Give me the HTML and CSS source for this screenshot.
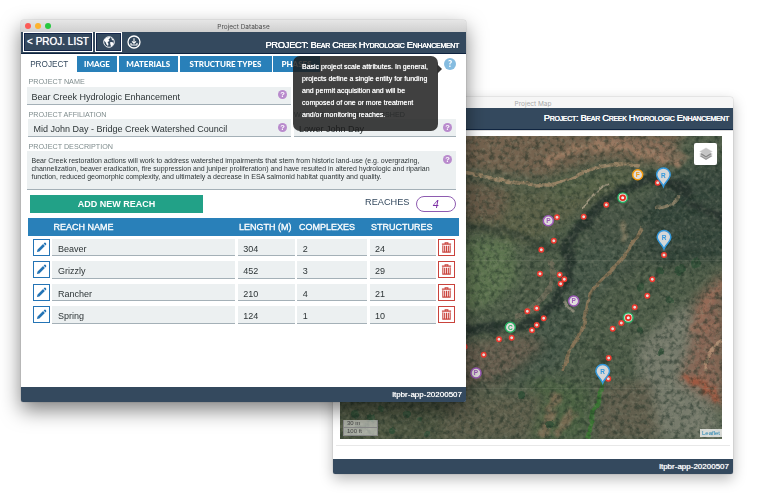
FILE: index.html
```html
<!DOCTYPE html>
<html lang="en">
<head>
<meta charset="utf-8">
<title>Project Database</title>
<link rel="stylesheet" href="styles.css">
</head>
<body>
<section class="window map-window">
  <div class="titlebar muted"><span>Project Map</span></div>
  <header class="bar"><h1 class="caps">Project: Bear Creek Hydrologic Enhancement</h1></header>
  <main class="map-body">
    <svg class="map" viewBox="340 136 382 303">
      <defs>
        <filter id="rough" x="-5%" y="-5%" width="110%" height="110%" color-interpolation-filters="sRGB">
          <feTurbulence type="fractalNoise" baseFrequency="0.09" numOctaves="4" seed="4"/>
          <feDisplacementMap in="SourceGraphic" scale="13" xChannelSelector="R" yChannelSelector="G"/>
          <feGaussianBlur stdDeviation="1.4"/>
        </filter>
        <filter id="fine" x="-5%" y="-5%" width="110%" height="110%" color-interpolation-filters="sRGB">
          <feTurbulence type="fractalNoise" baseFrequency="0.1" numOctaves="3" seed="9"/>
          <feDisplacementMap in="SourceGraphic" scale="5" xChannelSelector="R" yChannelSelector="G"/>
          <feGaussianBlur stdDeviation="0.7"/>
        </filter>
        <filter id="soft" x="-20%" y="-20%" width="140%" height="140%" color-interpolation-filters="sRGB"><feGaussianBlur stdDeviation="6"/></filter>
        <filter id="grain" x="0" y="0" width="100%" height="100%" color-interpolation-filters="sRGB">
          <feTurbulence type="fractalNoise" baseFrequency="0.2" numOctaves="4" seed="12"/>
          <feColorMatrix values="0 0 0 0 0.1  0 0 0 0 0.17  0 0 0 0 0.13  2.4 1.4 0 0 -1.7"/>
        </filter>
        <filter id="light" x="0" y="0" width="100%" height="100%" color-interpolation-filters="sRGB">
          <feTurbulence type="fractalNoise" baseFrequency="0.25" numOctaves="3" seed="31"/>
          <feColorMatrix values="0 0 0 0 0.62  0 0 0 0 0.63  0 0 0 0 0.54  0 2 1.4 0 -1.6"/>
        </filter>
        <g id="dot"><circle r="2.2" fill="#e5ddd9" stroke="#ee3b30" stroke-width="1.5"/></g>
        <g id="ring"><circle r="4.8" fill="#ddd" stroke="#27ae60" stroke-width="1.4"/><circle r="2.4" fill="#eee" stroke="#e62d1e" stroke-width="1.7"/></g>
        <path id="pin" d="M0 11C-1.600 6.500 -6.800 3.600 -6.800 -0.900A6.800 6.600 0 1 1 6.800 -0.900C6.800 3.600 1.600 6.500 0 11Z" fill="#d5d7d8" stroke="#3498db" stroke-width="1.5"/>
      </defs>
      <rect x="340" y="136" width="382" height="303" fill="#505e4a"/>
      <g filter="url(#soft)">
        <path d="M460 125H690L665 165 600 160 540 178 460 168Z" fill="#75634f"/>
        <path d="M460 180 540 190 600 172 645 170 590 205 530 245 460 225Z" fill="#5c6148"/>
        <path d="M460 178 510 190 500 222 460 218Z" fill="#6b5d4a"/>
        <path d="M555 178 640 172 600 190 550 205Z" fill="#576348"/>
        <path d="M462 238 512 240 518 280 490 305 455 312Z" fill="#5e7550"/>
        <path d="M675 170 735 160V260L650 265 625 225Z" fill="#3c4b40"/>
        <path d="M580 215 650 195 640 270 585 300Z" fill="#495647"/>
        <path d="M575 245 630 245 590 310 560 370 480 390 520 350Z" fill="#49594a"/>
        <path d="M455 345 530 335 545 345 500 385 455 390Z" fill="#685e4f"/>
        <path d="M635 345 690 300 705 380 725 440 655 440 640 390Z" fill="#777b6c"/>
        <path d="M725 270 695 300 690 350 680 380 725 410Z" fill="#876655"/>
        <path d="M600 385 650 380 660 440H595Z" fill="#625f4e"/>
        <path d="M535 375 590 390 585 440H520Z" fill="#4c6243"/>
        <path d="M335 400H455V445H335Z" fill="#505843"/>
        <path d="M450 395 545 395 530 440H440Z" fill="#5f5f4c"/>
      </g>
      <g filter="url(#rough)" fill="none">
        <path d="M545 162Q580 144 610 146T680 166" stroke="#a58066" stroke-width="7" opacity=".75"/>
        <path d="M590 142 665 138 690 158 675 167 640 150Z" fill="#9b7863" opacity=".55"/>
        <path d="M462 224Q500 228 535 242T575 250" stroke="#2c382f" stroke-width="6" opacity=".6"/>
        <path d="M690 190 665 178 640 182Q610 194 592 214T564 244Q573 258 566 280T543 314 516 326 460 332" stroke="#28342f" stroke-width="10" opacity=".9"/>
        <path d="M665 178Q680 188 690 203L725 220" stroke="#29342f" stroke-width="9" opacity=".85"/>
        <path d="M695 165 722 160M650 210 720 190M650 240 722 235M660 262 718 250M640 220 700 214" stroke="#2c4034" stroke-width="7" opacity=".55"/>
        <path d="M572 320Q545 350 505 377L468 390" stroke="#334234" stroke-width="2.500" opacity=".8"/>
        <path d="M722 283 704 305 694 330 722 325M678 382 705 378 718 402 722 400" stroke="#a5705a" stroke-width="6" opacity=".5"/>
        <path d="M685 378 705 385 718 401" stroke="#a2543b" stroke-width="7" opacity=".8"/>
        <path d="M620 222Q632 234 622 243" stroke="#a79273" stroke-width="6" opacity=".6"/>
        <path d="M557 390 543 437M573 410 555 436" stroke="#8b705a" stroke-width="8" opacity=".7"/>
        <path d="M596 345 604 360 601 376" stroke="#343d31" stroke-width="8" opacity=".6"/>
      </g>
      <g filter="url(#fine)" fill="none">
        <path d="M460 171Q520 186 550 185C580 180 588 159 640 166" stroke="#998466" stroke-width="3.500"/>
        <path d="M550 260Q558 284 541 300T515 318" stroke="#7b715f" stroke-width="5" opacity=".65"/>
        <path d="M642 228Q626 258 600 282C578 300 596 318 569 352L563 372" stroke="#877457" stroke-width="3.500"/>
        <path d="M582 210Q592 192 608 184" stroke="#b1a48c" stroke-width="1.600" opacity=".8"/>
        <path d="M655 209Q678 204 679 195" stroke="#9b8b6f" stroke-width="3" opacity=".8"/>
        <path d="M564 302 574 313" stroke="#a39b87" stroke-width="3" opacity=".7"/>
        <path d="M722 340Q705 350 706 371" stroke="#bc9678" stroke-width="3" opacity=".8"/>
        <path d="M602 380Q602 398 594 410L588 439" stroke="#3c7434" stroke-width="4.500"/>
      </g>
      <g fill="#2f4f37" filter="url(#fine)" opacity=".85">
        <circle cx="371" cy="417" r="4"/><circle cx="392" cy="431" r="3"/><circle cx="407" cy="414" r="3"/><circle cx="420" cy="419" r="3"/><circle cx="355" cy="414" r="4"/><circle cx="381" cy="409" r="3"/><circle cx="427" cy="434" r="3"/><circle cx="521" cy="395" r="4"/><circle cx="550" cy="424" r="4"/><circle cx="670" cy="300" r="3"/><circle cx="661" cy="352" r="3"/><circle cx="641" cy="288" r="4"/><circle cx="680" cy="270" r="5"/><circle cx="696" cy="263" r="5"/><circle cx="660" cy="271" r="4"/><circle cx="640" cy="330" r="3"/>
      </g>
      <rect x="340" y="136" width="382" height="303" filter="url(#grain)" opacity=".5"/>
      <rect x="340" y="136" width="382" height="303" filter="url(#light)" opacity=".28"/>
      <path d="M340 260.500H722M340 388.500H722" stroke="#9da08f" stroke-width=".6" opacity=".25"/>
      <use href="#dot" x="657.7" y="182.700"/><use href="#dot" x="606.3" y="204.700"/><use href="#dot" x="583.7" y="216.700"/><use href="#dot" x="557" y="217.300"/><use href="#dot" x="553.800" y="240.700"/><use href="#dot" x="541.3" y="249.700"/><use href="#dot" x="540" y="273.700"/><use href="#dot" x="559.7" y="274.700"/><use href="#dot" x="564.3" y="279.300"/><use href="#dot" x="560.7" y="283.700"/><use href="#dot" x="536.7" y="308.300"/><use href="#dot" x="527.3" y="311.300"/><use href="#dot" x="543.7" y="318.300"/><use href="#dot" x="536.7" y="325"/><use href="#dot" x="532" y="330.300"/><use href="#dot" x="511.7" y="337.700"/><use href="#dot" x="499" y="339.300"/><use href="#dot" x="483.7" y="354.700"/><use href="#dot" x="464.7" y="346.700"/><use href="#dot" x="664" y="255"/><use href="#dot" x="652.3" y="279.300"/><use href="#dot" x="647.3" y="295.700"/><use href="#dot" x="634.7" y="307.300"/><use href="#dot" x="621.3" y="323"/><use href="#dot" x="612.7" y="328.700"/><use href="#dot" x="608.7" y="358"/><use href="#dot" x="608.3" y="378.700"/>
      <use href="#ring" x="622.7" y="197.700"/><use href="#ring" x="628.3" y="317.700"/>
      <g class="badge">
        <circle cx="637.700" cy="174.700" r="5" stroke="#f39c12"/><text x="637.700" y="177" fill="#f39c12">F</text>
        <circle cx="548.3" cy="220.700" r="5" stroke="#9b59b6"/><text x="548.3" y="223" fill="#9b59b6">P</text>
        <circle cx="573.7" cy="301" r="5" stroke="#9b59b6"/><text x="573.7" y="303.300" fill="#9b59b6">P</text>
        <circle cx="476" cy="373" r="5" stroke="#9b59b6"/><text x="476" y="375.300" fill="#9b59b6">P</text>
        <circle cx="510.3" cy="327.200" r="5" stroke="#27ae60"/><text x="510.3" y="329.500" fill="#27ae60">C</text>
        <use href="#pin" x="663.4" y="175.500"/><text x="663.4" y="177.700" fill="#3498db">R</text>
        <use href="#pin" x="664" y="238"/><text x="664" y="240.200" fill="#3498db">R</text>
        <use href="#pin" x="602.7" y="372"/><text x="602.7" y="374.200" fill="#3498db">R</text>
      </g>
    </svg>
    <div class="layers"><svg viewBox="0 0 14 14"><path d="M7 5.500 13.500 9 7 13 .5 9Z" fill="#999"/><path d="M7 3.500 13.500 7 7 11 .5 7Z" fill="#888" stroke="#eee" stroke-width=".5"/><path d="M7 .8 13.500 4.500 7 8.700 .5 4.500Z" fill="#c5c5c5" stroke="#eee" stroke-width=".4"/></svg></div>
    <div class="scale"><span>30 m</span><span>100 ft</span></div>
    <div class="credit">Leaflet</div>
  </main>
  <footer class="bar foot">ltpbr-app-20200507</footer>
</section>

<section class="window db-window">
  <div class="titlebar"><i class="light red"></i><i class="light amber"></i><i class="light green"></i><span>Project Database</span></div>
  <header class="bar">
    <button class="btn-list">&lt; PROJ. LIST</button>
    <button class="btn-globe"><svg viewBox="0 0 12 12"><circle cx="6" cy="6" r="5.300" fill="#34495e" stroke="#fff" stroke-width=".9"/><path d="M1 4.500Q2.500 1 6.800 1L7.200 2 5.500 3.500 6.500 5 4.500 6 5.500 8 5 10 3.500 8.500 2.800 6.500ZM8.300 1.600 10.600 4 9.800 4.600 8.700 3.500ZM7 6.300 9 6 10.800 7 9 10.400 7.600 9.500Z" fill="#fff"/></svg></button>
    <svg class="download" viewBox="0 0 14 14"><circle cx="7" cy="7" r="6" fill="none" stroke="#fff" stroke-width="1.300"/><path d="M7 3.300V8M5 6.300 7 8.300 9 6.300M4 8V10H10V8" fill="none" stroke="#fff" stroke-width="1.100"/></svg>
    <h1 class="caps">PROJECT: Bear Creek Hydrologic Enhancement</h1>
  </header>
  <nav class="tabs"><a class="on">PROJECT</a><a class="w1">IMAGE</a><a class="w2">MATERIALS</a><a class="w3">STRUCTURE TYPES</a><a class="w4">PHASES</a><b class="help">?</b></nav>
  <main class="form">
    <div class="field name"><label>PROJECT NAME</label><div class="input"><span>Bear Creek Hydrologic Enhancement</span><b class="q">?</b></div></div>
    <div class="pair">
      <div class="field aff"><label>PROJECT AFFILIATION</label><div class="input"><span>Mid John Day - Bridge Creek Watershed Council</span><b class="q">?</b></div></div>
      <div class="field"><label>WATERSHED / SUBWATERSHED</label><div class="input"><span>Lower John Day</span><b class="q">?</b></div></div>
    </div>
    <div class="field desc"><label>PROJECT DESCRIPTION</label><div class="input area"><p>Bear Creek restoration actions will work to address watershed impairments that stem from historic land-use (e.g. overgrazing,<br>channelization, beaver eradication, fire suppression and juniper proliferation) and have resulted in altered hydrologic and riparian<br>function, reduced geomorphic complexity, and ultimately a decrease in ESA salmonid habitat quantity and quality.</p><b class="q">?</b></div></div>
    <div class="actions"><button class="add">ADD NEW REACH</button><span class="reaches">REACHES</span><em>4</em></div>
    <div class="grid head"><span>REACH NAME</span><span>LENGTH (M)</span><span class="cx">COMPLEXES</span><span class="low">STRUCTURES</span></div>
    <div class="rows" id="rows"></div>
  </main>
  <footer class="bar foot">ltpbr-app-20200507</footer>
  <aside class="tooltip">Basic project scale attributes. In general,<br>projects define a single entity for funding<br>and permit acquisition and will be<br>composed of one or more treatment<br>and/or monitoring reaches.</aside>
</section>
<script src="app.js"></script>
</body>
</html>
```
FILE: app.js
```js
const reaches = [
  ["Beaver", 304, 2, 24],
  ["Grizzly", 452, 3, 29],
  ["Rancher", 210, 4, 21],
  ["Spring", 124, 1, 10]
];
const pencil = '<svg viewBox="0 0 12 12"><path d="M1 11 1.700 8.300 7.700 2.300 9.700 4.300 3.700 10.300ZM8.300 1.700 9.200 .8Q10 .4 10.700 1.100T11.200 2.800L10.300 3.700Z" fill="currentColor"/></svg>';
const trash = '<svg viewBox="0 0 12 12"><path d="M4.500 2V.8H7.500V2M1 2.300H11M2 3.500V11H10V3.500M4 4V10.500M6 4V10.500M8 4V10.500" fill="none" stroke="currentColor" stroke-width="1.200"/></svg>';
document.getElementById("rows").innerHTML = reaches.map(r =>
  `<div class="grid row"><button class="edit">${pencil}</button>${r.map(v => `<span>${v}</span>`).join("")}<button class="del">${trash}</button></div>`
).join("");
```
FILE: styles.css
```css
* { box-sizing: border-box; }
body { margin: 0; width: 758px; height: 500px; overflow: hidden; position: relative; background: #fff; font-family: "Liberation Sans", Arial, sans-serif; color: #2d3436; }
button { font: inherit; padding: 0; margin: 0; }
h1, p { margin: 0; font-weight: normal; }
.window { position: absolute; display: flex; flex-direction: column; background: #fff; border-radius: 3px; }
.db-window { left: 21px; top: 20px; width: 445px; height: 382px; box-shadow: 0 8px 20px rgba(0,0,0,.5), 0 0 1px rgba(0,0,0,.6); }
.map-window { left: 333px; top: 97px; width: 400px; height: 377px; box-shadow: 0 5px 14px rgba(0,0,0,.28), 0 0 1px rgba(0,0,0,.5); }
.titlebar { flex: none; height: 12px; position: relative; display: flex; align-items: center; gap: 4px; padding-left: 4px; background: linear-gradient(#e6e6e6, #cfcfcf); border-radius: 3px 3px 0 0; font: 6.500px/12px Inter, sans-serif; color: #4d4d4d; }
.titlebar span { position: absolute; inset: 0; text-align: center; padding-top: 1px; }
.muted { height: 11px; background: #f6f6f6; color: #aaa; }
.light { width: 6px; height: 6px; border-radius: 50%; }
.red { background: #fc5b57; } .amber { background: #fdb32f; } .green { background: #28c840; }
.bar { flex: none; height: 21.500px; background: #34495e; border-bottom: 1px solid #0f2440; color: #fff; display: flex; align-items: center; }
.caps { margin-left: auto; padding: 5px 7px 0 0; font-size: 9.400px; letter-spacing: -.31px; line-height: 12px; font-variant: small-caps; text-shadow: 0 0 .6px #fff; -webkit-text-stroke: .2px #fff; white-space: nowrap; }
.map-window .caps { padding: 0 4px 0 0; }
.foot { margin-top: auto; height: 15px; justify-content: flex-end; padding-right: 4px; font-size: 8px; text-shadow: 0 0 .7px #fff; border: 0; border-radius: 0 0 2px 2px; }
.btn-list { width: 70px; height: 20px; margin-left: 2px; border: 1px solid #fff; outline: 1px solid #13254a; outline-offset: -2px; background: #34495e; color: #fff; font-size: 10px; line-height: 16px; padding-bottom: 1px; text-shadow: 0 0 .7px #fff; white-space: nowrap; }
.btn-globe { width: 27px; height: 20px; margin-left: 2px; border: 1px solid #fff; outline: 1px solid #13254a; outline-offset: -2px; background: #34495e; display: grid; place-items: center; }
.btn-globe svg { width: 12px; height: 12px; }
.download { width: 14px; height: 14px; margin-left: 5px; }
.tabs { flex: none; display: flex; height: 16px; margin: 2px 0 0 2px; gap: 1.500px; font: 900 8px/16px Lato, sans-serif; color: #fff; text-align: center; white-space: nowrap; }
.tabs a { background: #2980b9; }
.tabs .on { width: 52.500px; background: #fff; color: #34495e; font: 8.200px/17px "Liberation Sans", sans-serif; }
.w1 { width: 40px; } .w2 { width: 59.500px; } .w3 { width: 92px; } .w4 { width: 47px; }
.help { margin: 2px 10px 0 auto; width: 12px; height: 12px; border-radius: 50%; background: #85bce0; font-size: 9px; line-height: 12px; }
.form { flex: 1; padding: 4px 7px 0 6px; }
.field label { display: block; height: 11px; padding: .5px 0 0 1.500px; font-size: 7.200px; line-height: 11px; color: #7f8c8d; white-space: nowrap; }
.input { height: 18px; display: flex; align-items: center; padding: 2px 4px 0 4.500px; background: #ecf0f1; border-bottom: 1px solid #a4b0b7; font-size: 9px; white-space: nowrap; }
.q { margin: -4px 0 0 auto; flex: none; width: 9px; height: 9px; border-radius: 50%; background: #b98bcd; color: #fff; font: 700 7.500px/9px "Liberation Sans", sans-serif; text-align: center; }
.name { width: 264px; }
.name label { margin-bottom: .5px; }
.pair { display: flex; gap: 2.500px; margin: 3px 3px 0 1px; }
.pair label { padding-left: .5px; }
.pair .input { padding-left: 5.500px; padding-top: 3px; }
.aff { flex: none; width: 263px; }
.pair .field:last-child { flex: 1; }
.desc { margin: 3px 3px 0 0; }
.area { height: 39px; align-items: flex-start; padding-top: 6px; font-size: 7px; line-height: 8px; }
.area .q { margin-top: -2px; }
.actions { display: flex; height: 18px; margin: 4.500px 3px 0 3px; align-items: center; color: #34495e; font-size: 9.200px; }
.add { width: 173px; height: 18px; border: 0; background: #22a187; color: #fff; font-weight: 700; font-size: 9px; }
.reaches { margin: -3px 6px 0 auto; }
.actions em { width: 40.500px; height: 16px; border: 1px solid #8e5bb0; border-radius: 8px; text-align: center; color: #7d2fa5; font-size: 11px; line-height: 14px; }
.grid { display: grid; grid-template-columns: 183.500px 57px 70px 66px; column-gap: 2px; }
.head { margin: 5px 0 0 1px; height: 18px; padding-left: 25.500px; background: #2980b9; color: #fff; font-size: 9px; line-height: 18px; -webkit-text-stroke: .3px #fff; white-space: nowrap; }
.head .cx { padding-left: 1px; }
.head .low { padding-left: 1px; }
.rows { display: flex; flex-direction: column; gap: 5px; margin: 3px 0 0 6px; }
.row { grid-template-columns: 17px 183px 57px 70px 66px 17px; column-gap: 2.400px; height: 17.500px; }
.row span { background: #ecf0f1; border-bottom: 1px solid #a4b0b7; padding: 2px 0 0 5.500px; font-size: 9px; line-height: 17px; height: 17.500px; }
.row button { height: 17px; background: #fff; display: grid; place-items: center; border: 1px solid; }
.row svg { width: 11px; height: 11px; }
.edit { color: #2474b5; } .del { color: #c9433c; }
.tooltip { position: absolute; left: 272px; top: 36px; width: 145px; height: 75px; padding: 5px 0 0 9px; border-radius: 7px; background: rgba(25,25,25,.83); color: #fff; font-size: 7px; line-height: 12px; text-shadow: 0 0 .7px #fff; white-space: nowrap; }
.tooltip::after { content: ""; position: absolute; left: 144px; top: 8px; border: 5px solid transparent; border-left-color: #333; border-right: 0; }
.map-body { position: relative; flex: 1; padding: 5.500px 7px 0; border-top: 1px solid #ddd; }
.map { display: block; width: 382px; height: 303px; }
.map-body::after { content: ""; display: block; margin: 6px -4px 0; border-top: 1px solid #e8e8e8; }
.badge circle { fill: #e0dddd; stroke-width: 1.500px; }
.badge text { font: 700 6.500px "Liberation Sans", sans-serif; text-anchor: middle; }
.layers { position: absolute; left: 361px; top: 12px; width: 23px; height: 22.500px; background: #fff; border-radius: 2px; box-shadow: 0 0 1px #555; display: grid; place-items: center; }
.layers svg { width: 14px; height: 14px; }
.scale { position: absolute; left: 10px; bottom: 23px; width: 35px; font-size: 6px; line-height: 7px; color: #444; }
.scale span { display: block; height: 8px; padding-left: 3px; background: rgba(255,255,255,.5); border: 1px solid #888; border-top: 0; }
.credit { position: absolute; right: 11px; bottom: 22px; padding: 0 2px; background: rgba(255,255,255,.75); color: #2584b0; font-size: 6px; line-height: 8px; }
```
